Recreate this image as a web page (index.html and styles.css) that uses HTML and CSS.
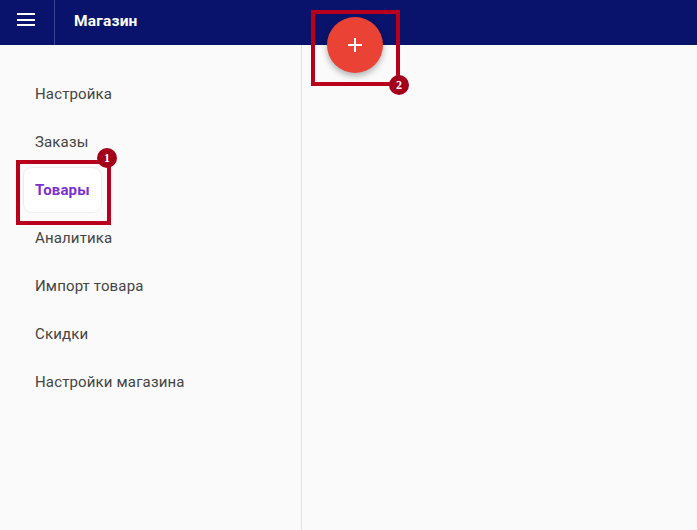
FILE: index.html
```html
<!DOCTYPE html>
<html lang="ru">
<head>
  <meta charset="UTF-8">
  <meta name="viewport" content="width=device-width, initial-scale=1.0">
  <title>Магазин</title>
  <link rel="stylesheet" href="styles.css">
</head>
<body>
  <header class="topbar">
    <div class="menu-btn">
      <span></span><span></span><span></span>
    </div>
    <div class="title">Магазин</div>
  </header>

  <div class="layout">
    <aside class="sidebar">
      <ul class="nav">
        <li>Настройка</li>
        <li>Заказы</li>
        <li class="active"><span>Товары</span></li>
        <li>Аналитика</li>
        <li>Импорт товара</li>
        <li>Скидки</li>
        <li>Настройки магазина</li>
      </ul>
    </aside>
    <main class="content"></main>
  </div>

  <!-- кнопка добавления -->
  <button class="fab">
    <svg width="18" height="18" viewBox="0 0 18 18"><path d="M9 2v14M2 9h14" stroke="#fff" stroke-width="2"/></svg>
  </button>

  <!-- пометки -->
  <div class="mark mark-1"><i>1</i></div>
  <div class="mark mark-2"><i>2</i></div>
</body>
</html>
```

FILE: styles.css
```css
/* Общие стили */
body {
  margin: 0;
  font-family: Roboto, "Noto Sans", sans-serif;
  background-color: #fafafa;
  color: #444;
  height: 530px;
  overflow: hidden;
}

.topbar {
  display: flex;
  align-items: stretch;
  height: 45px;
  background-color: #0a136b;
  color: #fff;
}

.menu-btn {
  width: 55px;
  border-right: 1px solid #3b4596;
  display: flex;
  flex-direction: column;
  gap: 3.5px;
  padding: 13px 0 0 17px;
  box-sizing: border-box;
}

.menu-btn span {
  display: block;
  width: 18px;
  height: 2px;
  background: #fff;
}

.title {
  padding-left: 19px;
  line-height: 42px;
  font-size: 15.5px;
  font-weight: bold;
  letter-spacing: 0.2px;
}

.layout {
  display: flex;
  height: 485px;
}

.sidebar {
  width: 301px;
  border-right: 1px solid #e0e0e0;
  padding-top: 25px;
}

.nav {
  list-style: none;
  margin: 0;
  padding: 0;
}

.nav li {
  height: 48px;
  line-height: 48px;
  padding-left: 35px;
  font-size: 15px;
  letter-spacing: 0.15px;
}

.nav li.active {
  padding-left: 23px;
  display: flex;
  align-items: center;
}

.nav li.active span {
  display: block;
  width: 55px;
  height: 44px;
  line-height: 44px;
  padding: 0 11px;
  background: #fff;
  border: 1px solid #eee;
  border-radius: 9px;
  color: #7b2fd2;
  font-weight: bold;
}

.content {
  flex: 1;
}

.fab {
  position: absolute;
  left: 327px;
  top: 17px;
  width: 56px;
  height: 56px;
  border: none;
  border-radius: 50%;
  background-color: #ea4335;
  box-shadow: 0 3px 6px rgba(0, 0, 0, 0.3);
  display: flex;
  align-items: center;
  justify-content: center;
  padding: 0;
}

.mark {
  position: absolute;
  border: 4px solid #b8001c;
  box-sizing: border-box;
}

.mark-1 {
  left: 16px;
  top: 160px;
  width: 95px;
  height: 65px;
}

.mark-2 {
  left: 311px;
  top: 10px;
  width: 89px;
  height: 76px;
}

.mark i {
  position: absolute;
  right: -10px;
  top: -16px;
  width: 20px;
  height: 20px;
  border-radius: 50%;
  background: #a3001b;
  color: #fff;
  font: bold 12px/20px "Liberation Serif", serif;
  font-style: normal;
  text-align: center;
}

.mark-2 i {
  right: -13px;
  top: auto;
  bottom: -13px;
}
```
